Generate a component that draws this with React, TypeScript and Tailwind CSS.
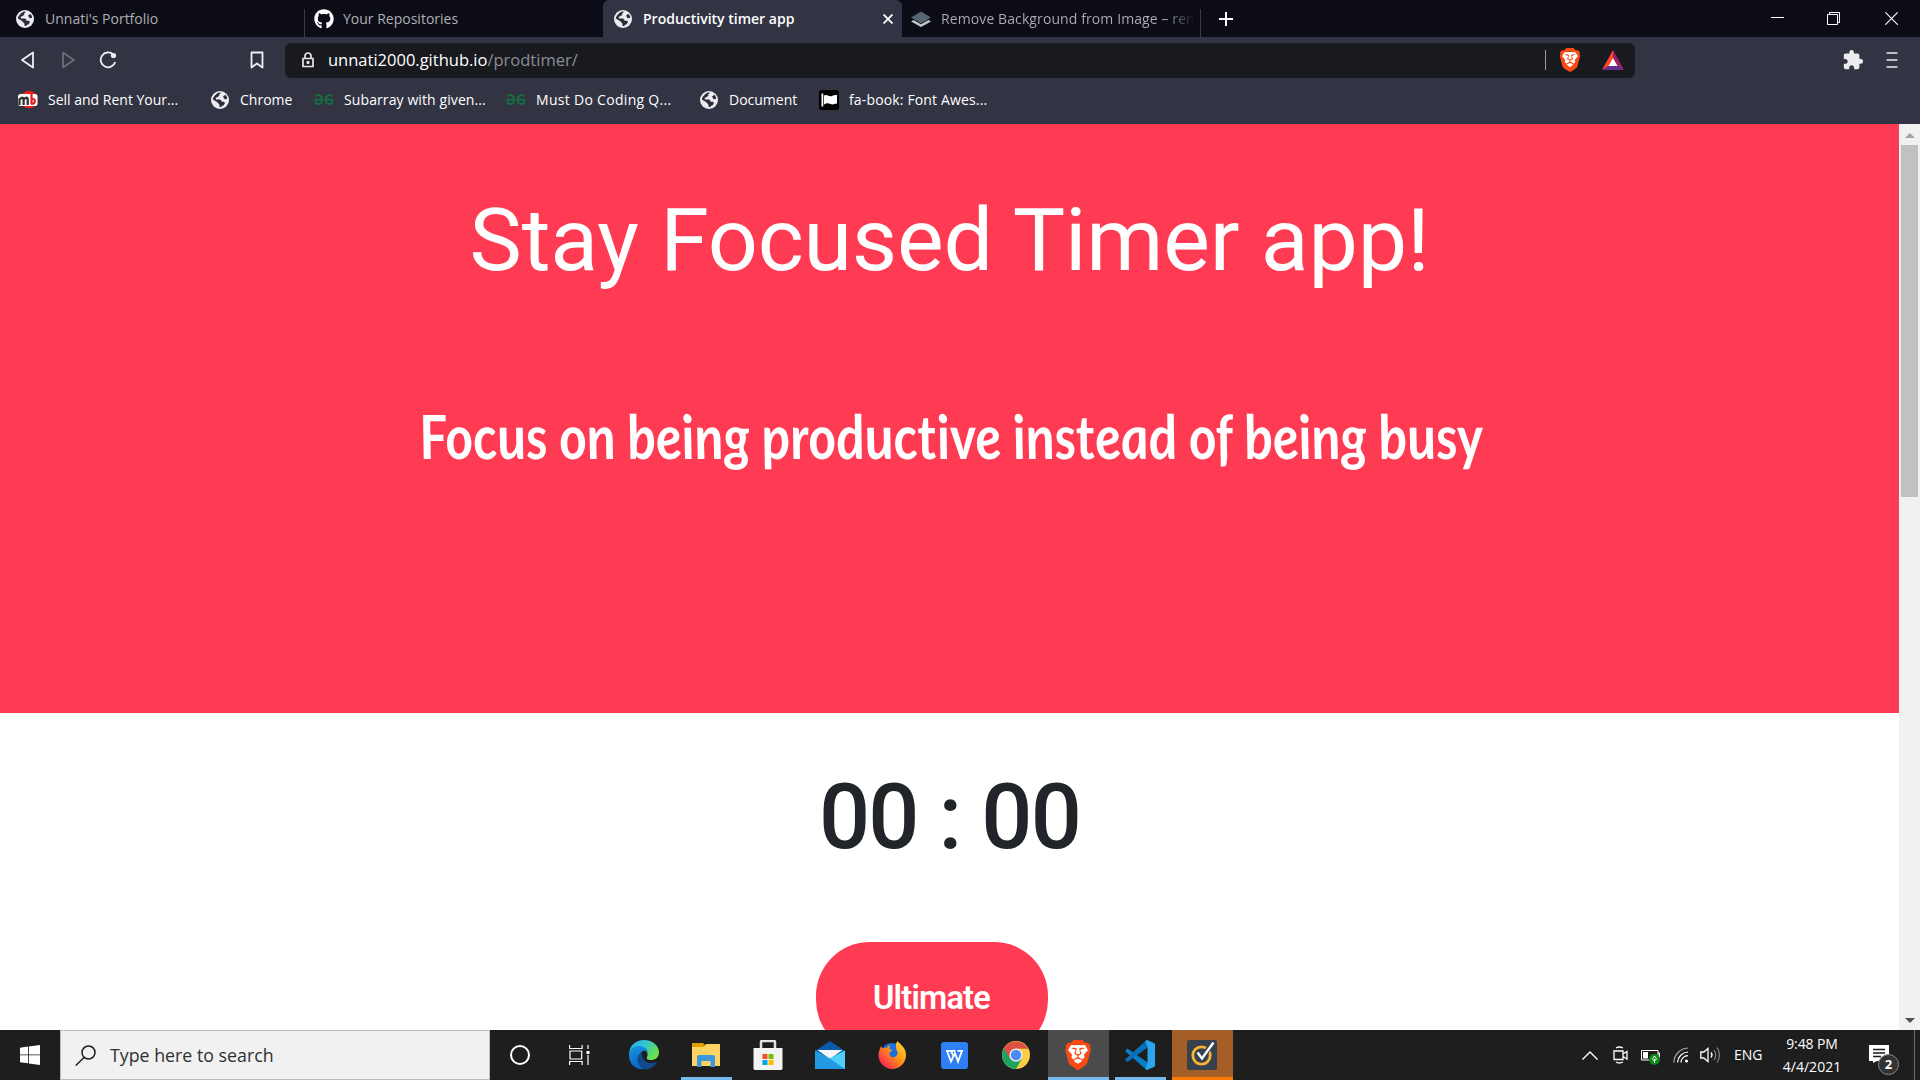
import React from 'react';
import { FaGithub } from 'react-icons/fa';
import { SiBrave } from 'react-icons/si';
import { MdExtension } from 'react-icons/md';

function Globe() {
  return (
    <svg viewBox="0 0 18 18" className="h-[18px] w-[18px]">
      <circle cx="9" cy="9" r="9" fill="#ededf0" />
      <path
        d="M10.2 1.8 8 3.6l.4 1.2-2.6 1.6-1 .2v1.8h4l1.6 1.2v1.2H13l1 1.2-1.6 2.4-2 .6v1.4l-2-.8v-2.2L6 11 1.8 8.4 2.6 6l3-3.2L8 1.6zM12 5.4l2.6-1.6 1.6 3-.4 1.2-2.2.2z"
        fill="#2b2d3a"
      />
    </svg>
  );
}

function Layers() {
  return (
    <svg viewBox="0 0 20 18" className="h-[18px] w-5">
      <path d="M0 11.5 10 17l10-5.5-2.5-1.4L10 14.2 2.5 10.1z" fill="#c3c8cc" />
      <path d="M10 1.5 0 7.5l10 6 10-6z" fill="#56656f" />
    </svg>
  );
}

function BrickIcon() {
  return (
    <svg viewBox="0 0 20 20" className="h-5 w-5">
      <circle cx="11" cy="9.500" r="8.800" fill="#f01c1c" />
      <rect x="0" y="4" width="19.500" height="12" rx="2.500" fill="#fff" />
      <path d="M1.500 15V8.500M1.500 9.500Q5.200 6 5.600 9.500V15M5.600 9.500Q9.500 6 9.700 9.500V15" fill="none" stroke="#333" strokeWidth="2.300" />
      <path d="M13.500 4v10.500M13.500 9.500c4.500-2 4.500 5 0 4.200" fill="none" stroke="#e02020" strokeWidth="2.200" />
    </svg>
  );
}

function GeeksIcon() {
  return (
    <svg viewBox="0 0 20 18" className="h-[18px] w-5" fill="none" stroke="#16713f" strokeWidth="1.700">
      <path d="M1.200 5.500C3 3.200 8 3.200 8 8.600c0 6-6.500 6-6.800 0H9.300M18.500 5.500C17 3.200 11.700 3.200 11.700 8.600c0 6 6.600 6 6.800 0h-8" />
    </svg>
  );
}

function FlagIcon() {
  return (
    <svg viewBox="0 0 20 20" className="h-5 w-5">
      <rect width="20" height="20" rx="2.500" fill="#000" />
      <path d="M2.500 3.500h1.800v13H2.500zM5 5.500c3-2 5 1.600 8 .5 1.500-.6 2.500-1 5-1v8.500c-3 .5-4 1.500-6.500.5-3-1.200-4-.8-6.500.5z" fill="#fff" />
    </svg>
  );
}

function BraveLion({ className }: { className: string }) {
  return (
    <div className={'relative ' + className}>
      <svg viewBox="0 0 24 24" className="absolute inset-0 h-full w-full">
        <path d="M6 4h12l2 4-2 9-6 5-6-5L4 8z" fill="#fff" />
      </svg>
      <SiBrave className="absolute inset-0 h-full w-full text-[#fb4b14]" />
    </div>
  );
}

function Tab({ icon, title, className }: { icon: React.ReactNode; title: string; className: string }) {
  return (
    <div className={'flex h-full shrink-0 items-center ' + className}>
      {icon}
      <span className="whitespace-nowrap">{title}</span>
    </div>
  );
}

function TabStrip() {
  return (
    <div className="flex h-[37px] items-center bg-[#0b0c15] text-sm text-[#aeafb4]">
      <Tab icon={<Globe />} title="Unnati's Portfolio" className="w-[304px] gap-[11px] pl-4" />
      <div className="mt-[9px] h-7 w-px bg-[#3b3c43]" />
      <Tab
        icon={<FaGithub className="h-5 w-5 text-white" />}
        title="Your Repositories"
        className="w-[298px] gap-[9px] pl-[9px]"
      />
      <div className="flex h-full w-[299px] items-center gap-[11px] rounded-t-md bg-[#323443] pl-[11px] pr-[9px] font-semibold text-white">
        <Globe />
        <span className="flex-1 whitespace-nowrap">Productivity timer app</span>
        <svg viewBox="0 0 10 10" className="h-2.5 w-2.5" stroke="#fff" strokeWidth="1.800">
          <path d="M.5.5l9 9M9.500.5l-9 9" />
        </svg>
      </div>
      <div className="flex h-full w-[298px] items-center gap-2.5 pl-[9px]">
        <Layers />
        <span className="w-[254px] whitespace-nowrap bg-linear-to-r from-[#aeafb4] from-88% to-transparent bg-clip-text tracking-[0.1px] text-transparent">
          Remove Background from Image – ren
        </span>
      </div>
      <div className="mt-[9px] h-7 w-px bg-[#3b3c43]" />
      <svg viewBox="0 0 14 14" className="ml-[18px] h-3.5 w-3.5" stroke="#fff" strokeWidth="2">
        <path d="M7 0v14M0 7h14" />
      </svg>
      <div className="ml-auto flex items-center pr-[22px]">
        <svg viewBox="0 0 13 13" className="mr-[43px] h-[13px] w-[13px]" stroke="#fff">
          <path d="M0 5.500h13" />
        </svg>
        <svg viewBox="0 0 13 13" className="mr-[45px] h-[13px] w-[13px]" stroke="#fff" fill="none">
          <path d="M.5 2.500h10v10H.5zM2.500 2.500v-2h10v10h-2" />
        </svg>
        <svg viewBox="0 0 13 13" className="h-[13px] w-[13px]" stroke="#fff" strokeWidth="1.100">
          <path d="M.3.3l12.400 12.400M12.700.3.3 12.700" />
        </svg>
      </div>
    </div>
  );
}

function Toolbar() {
  return (
    <div className="flex h-[46px] items-center bg-[#323443] pl-5 pr-[22px]">
      <svg viewBox="0 0 14 18" className="h-[18px] w-3.5" fill="none" stroke="#f0f0f2" strokeWidth="1.800" strokeLinejoin="round">
        <path d="M13 1.500v15L2 9z" />
      </svg>
      <svg viewBox="0 0 14 18" className="ml-[27px] h-[18px] w-3.5" fill="none" stroke="#6a6c78" strokeWidth="1.800" strokeLinejoin="round">
        <path d="M2 1.500v15L13 9z" />
      </svg>
      <svg viewBox="0 0 18 18" className="ml-6 h-[18px] w-[18px]" fill="none" stroke="#f0f0f2" strokeWidth="1.800">
        <path d="M14.200 3.500A7.400 7.400 0 1 0 16.200 11" />
        <circle cx="14.500" cy="4.500" r="2.600" fill="#f0f0f2" stroke="none" />
      </svg>
      <svg viewBox="0 0 14 18" className="ml-[133px] h-[18px] w-3.5" fill="none" stroke="#f0f0f2" strokeWidth="1.800" strokeLinejoin="round">
        <path d="M1.500 1.500h11v15L7 12.500l-5.500 4z" />
      </svg>
      <div className="ml-[21px] flex h-[35px] w-[1350px] items-center rounded-md bg-[#181a20] pl-[17px] pr-[9px]">
        <svg viewBox="0 0 12 16" className="h-4 w-3" fill="none" stroke="#e4e4e6" strokeWidth="1.700">
          <path d="M1 6.500h10v8H1zM3 6.500V4a3 3 0 0 1 6 0v2.500" />
          <circle cx="6" cy="10.500" r=".8" fill="#e4e4e6" />
        </svg>
        <span className="ml-3.5 text-[16.5px] text-white">unnati2000.github.io</span>
        <span className="text-[16.5px] text-[#8c8d93]">/prodtimer/</span>
        <div className="ml-auto h-5 w-px bg-[#9a9ba0]" />
        <BraveLion className="ml-3 h-6 w-6" />
        <svg viewBox="0 0 22 20" className="ml-5 mr-0.5 h-5 w-[22px]">
          <path d="M11 0 0 20l7-4 4-7z" fill="#ff4724" />
          <path d="M11 0v9l4 7 7 4z" fill="#9e1f63" />
          <path d="M0 20h22l-6.500-4h-9z" fill="#662d91" />
          <path d="M11 8 6.500 16h9z" fill="#fff" />
        </svg>
      </div>
      <MdExtension className="ml-auto h-[22px] w-[22px] text-[#ececee]" />
      <svg viewBox="0 0 12 18" className="ml-[22px] h-[18px] w-3" stroke="#ececee" strokeWidth="1.600">
        <path d="M.5 2h11M.5 9h11M.5 16h11" />
      </svg>
    </div>
  );
}

function Bookmark({ icon, label, className }: { icon: React.ReactNode; label: string; className: string }) {
  return (
    <div className={'flex shrink-0 items-center gap-2.5 whitespace-nowrap ' + className}>
      <div className="flex w-5 justify-center">{icon}</div>
      <span>{label}</span>
    </div>
  );
}

function Bookmarks() {
  return (
    <div className="flex h-[41px] items-center bg-[#323443] pb-[7px] pl-[18px] text-sm text-white">
      <Bookmark icon={<BrickIcon />} label="Sell and Rent Your..." className="w-48" />
      <Bookmark icon={<Globe />} label="Chrome" className="w-[104px]" />
      <Bookmark icon={<GeeksIcon />} label="Subarray with given..." className="w-48 tracking-[0.1px]" />
      <Bookmark icon={<GeeksIcon />} label="Must Do Coding Q..." className="w-[193px] tracking-[0.3px]" />
      <Bookmark icon={<Globe />} label="Document" className="w-[120px]" />
      <Bookmark icon={<FlagIcon />} label="fa-book: Font Awes..." className="tracking-[0.15px]" />
    </div>
  );
}

function Scrollbar() {
  return (
    <div className="flex w-[21px] flex-col items-center bg-[#f1f1f1]">
      <div className="flex h-[21px] items-center">
        <svg viewBox="0 0 10 5" className="mt-0.5 h-[5px] w-2.5">
          <path d="M0 5 5 0l5 5z" fill="#a3a3a3" />
        </svg>
      </div>
      <div className="h-[352px] w-[17px] bg-[#c1c1c1]" />
      <div className="mt-auto flex h-[21px] items-center">
        <svg viewBox="0 0 10 5" className="mt-0.5 h-[5px] w-2.5">
          <path d="M0 0l5 5 5-5z" fill="#505050" />
        </svg>
      </div>
    </div>
  );
}

function Page() {
  return (
    <div className="flex min-h-0 flex-1 bg-white">
      <main className="flex flex-1 flex-col items-center overflow-hidden font-['Roboto',sans-serif]">
        <section className="flex h-[589px] w-full shrink-0 flex-col items-center bg-[#ff3b53] text-white">
          <h1 className="mt-[63px] whitespace-nowrap text-[88px] leading-[106px] tracking-[-0.22px]">Stay Focused Timer app!</h1>
          <p className="mt-[103px] w-[1062px] origin-left scale-x-[0.87] skew-x-[8deg] whitespace-nowrap font-['Lato',cursive] text-[61px] font-bold italic leading-20 [font-variant-ligatures:none]">
            Focus on being productive instead of being busy
          </p>
        </section>
        <div className="mt-[52px] h-[106px] shrink-0 whitespace-nowrap text-[90px] font-medium leading-[106px] tracking-[-1.7px] text-[#212529]">
          00 : 00
        </div>
        <button className="mr-[36px] mt-[71px] h-28 w-[232px] shrink-0 rounded-[54px] bg-[#ff3b53] text-[32.5px] font-semibold tracking-[-0.8px] text-white">
          Ultimate
        </button>
      </main>
      <Scrollbar />
    </div>
  );
}

function EdgeIcon() {
  return (
    <svg viewBox="0 0 30 30" className="h-[30px] w-[30px]">
      <defs>
        <linearGradient id="edgeTop" x1="0" y1="0" x2="1" y2=".5">
          <stop offset="0" stopColor="#2aa7e8" />
          <stop offset=".5" stopColor="#2fc5d2" />
          <stop offset="1" stopColor="#6be04b" />
        </linearGradient>
        <linearGradient id="edgeSide" x1="0" y1="0" x2=".4" y2="1">
          <stop offset="0" stopColor="#1b96e4" />
          <stop offset="1" stopColor="#0a64bd" />
        </linearGradient>
      </defs>
      <path d="M0 13C1 5 7 0 15 0c9 0 15 6 15 12.500 0 5-4 7.500-8 7.500-3.500 0-5-1.300-4-3 2-3.500-.5-7-5-7-5 0-10 .5-13 3z" fill="url(#edgeTop)" />
      <path d="M0 15c0-5 4-9 10-9 5 0 8.500 3 9 6.500-3-3.500-8-1.500-8 3.500 0 6 5 10 11 10-9 7-22 2-22-11z" fill="url(#edgeSide)" />
      <path d="M13 12.500C5 16 8 27 17 29.700c5-.7 9-3.700 11-7.700-1-.5-3 1.500-7 1-6-.7-8.500-5-8-10.500z" fill="#114a8b" />
    </svg>
  );
}

function ExplorerIcon() {
  return (
    <svg viewBox="0 0 28 24" className="h-6 w-7">
      <path d="M0 0h11l3 3v4H0z" fill="#e09f00" />
      <path d="M0 4h12l2-3h14v22H0z" fill="#fcd462" />
      <path d="M5 24V14q0-2 2-2h14q2 0 2 2v10h-4.500v-6h-9v6z" fill="#3c97dd" />
    </svg>
  );
}

function StoreIcon() {
  return (
    <svg viewBox="0 0 30 30" className="h-[30px] w-[30px]">
      <path d="M8 9V2q0-1 1-1h12q1 0 1 1v7" fill="none" stroke="#e4e4e4" strokeWidth="2.500" />
      <path d="M.5 8h29v20.500q0 1.500-1.500 1.500H2Q.5 30 .5 28.500z" fill="#f3f3f3" />
      <path d="M9.500 14h5v5h-5z" fill="#f25022" />
      <path d="M15.500 14h5v5h-5z" fill="#7fba00" />
      <path d="M9.500 20h5v5h-5z" fill="#00a4ef" />
      <path d="M15.500 20h5v5h-5z" fill="#ffb900" />
    </svg>
  );
}

function MailIcon() {
  return (
    <svg viewBox="0 0 30 28" className="h-7 w-[30px]">
      <path d="M0 10 15 0l15 10-15 9z" fill="#0a58a8" />
      <path d="M2.500 9h25L15 18z" fill="#f6f6f6" />
      <path d="M0 9.500 15 17.500l15-8V28H0z" fill="#28a8ea" />
      <path d="M30 9.500V28L15 17.500z" fill="#50d0f8" />
      <path d="M0 9.500V28h30z" fill="#229ae2" />
    </svg>
  );
}

function FirefoxIcon() {
  return (
    <svg viewBox="0 0 28 28" className="h-7 w-7">
      <defs>
        <linearGradient id="fox" x1="1" y1="0" x2="0" y2="1">
          <stop offset="0" stopColor="#ffe43a" />
          <stop offset=".45" stopColor="#ff9417" />
          <stop offset=".8" stopColor="#ff3647" />
          <stop offset="1" stopColor="#e21585" />
        </linearGradient>
      </defs>
      <circle cx="14" cy="13" r="11" fill="#1b6fe0" />
      <path d="M3 5l1.500 2.500C6 6.500 7 6.500 8.500 7L12 3.500 11.500 8l3 1-3 2.500c-.5 4 3 6 6 4 3-2 2.500-5 1-6 0-4-2-5 1-9.500 2 3 8.500 6 8.500 14A14 14 0 0 1 14 28 14 14 0 0 1 .5 14C.5 10 2 8 3 5z" fill="url(#fox)" />
    </svg>
  );
}

function WpsIcon() {
  return (
    <svg viewBox="0 0 27 27" className="h-[27px] w-[27px]">
      <rect width="27" height="27" rx="3" fill="#2f80f6" />
      <path d="M5 8.800h9.500M6 9l4 10.500 4-8.500 3 8.500L21 8.800h-4.500M10 9l3 6" fill="none" stroke="#fff" strokeWidth="1.800" />
    </svg>
  );
}

function ChromeIcon() {
  return (
    <svg viewBox="0 0 28 28" className="h-7 w-7">
      <circle cx="14" cy="14" r="14" fill="#ffcd42" />
      <path d="M14 14 1.900 7A14 14 0 0 0 14 28l6-10.500z" fill="#1da260" />
      <path d="M1.900 7A14 14 0 0 1 26.100 7.700H14L8 17.500z" fill="#dd5044" />
      <circle cx="14" cy="14" r="6.600" fill="#f1f1f1" />
      <circle cx="14" cy="14" r="5.200" fill="#4c8bf5" />
    </svg>
  );
}

function CodeIcon() {
  return (
    <svg viewBox="0 0 30 30" className="h-[30px] w-[30px]">
      <path d="M0 11l2.500-2.500 20 14V30L20.500 29z" fill="#0a7fc9" />
      <path d="M0 19.500 2.500 22l20-14.500V0L20.500 1z" fill="#0a6fb8" />
      <path d="M22 0l8 3.500v23L22 30l-1.500-1 2-6.500v-15l-2-6.500z" fill="#2aa5ee" />
    </svg>
  );
}

function NortonIcon() {
  return (
    <svg viewBox="0 0 30 30" className="h-[30px] w-[30px]">
      <rect width="30" height="30" rx="2" fill="#36414d" />
      <circle cx="14.500" cy="15.500" r="8.700" fill="none" stroke="#f9b233" strokeWidth="2.800" />
      <path d="M10.500 13.500l4 5.500L26 2.500" fill="none" stroke="#36414d" strokeWidth="5" />
      <path d="M10.500 12.500l4.500 6L26.500 2.500" fill="none" stroke="#fff" strokeWidth="2.400" />
    </svg>
  );
}

function TaskCell({ children, bar = '', bg = '' }: { children: React.ReactNode; bar?: string; bg?: string }) {
  return (
    <div className="flex h-full w-[62px] shrink-0 justify-center">
      <div className={'flex h-full w-[61px] flex-col items-center ' + bg}>
        <div className="flex flex-1 items-center">{children}</div>
        <div className={'-mt-[3px] h-[3px] ' + bar} />
      </div>
    </div>
  );
}

function Tray() {
  return (
    <div className="ml-auto flex h-full items-center">
      <svg viewBox="0 0 16 9" className="h-[9px] w-4" fill="none" stroke="#fff" strokeWidth="1.400">
        <path d="M.5 8.500 8 1l7.500 7.500" />
      </svg>
      <svg viewBox="0 0 15 18" className="ml-[15px] h-[18px] w-[15px]" fill="none" stroke="#fff" strokeWidth="1.300">
        <path d="M1 5h9v8.500H1zM10 8l4-2.500V13l-4-2.500M3 2q3-2 7 0M3 16q3 2 7 0" />
      </svg>
      <svg viewBox="0 0 20 16" className="ml-[13px] mt-1 h-4 w-5">
        <path d="M.5 1.500h16.500v9.500H.5zM17 4h1.500v4H17" fill="none" stroke="#fff" />
        <path d="M2 3h5v6.500H2z" fill="#fff" />
        <circle cx="13.500" cy="10.300" r="5.500" fill="#108a1c" />
        <path d="M13.500 7l2 2.800-2 2.200-2-2.200zM13.500 10v4" fill="none" stroke="#fff" />
      </svg>
      <svg viewBox="0 0 16 16" className="ml-3 h-4 w-4" fill="none" stroke="#fff" strokeWidth="1.200">
        <path d="M.8 15.500A15 15 0 0 1 15 1" stroke="#a5a5a5" />
        <path d="M4.500 15.500A11 11 0 0 1 15 5M8 15.500A7 7 0 0 1 15 8.700" />
        <circle cx="13.500" cy="14" r="1.600" fill="#fff" stroke="none" />
      </svg>
      <svg viewBox="0 0 21 18" className="ml-[11px] h-[18px] w-[21px]" fill="none" stroke="#fff" strokeWidth="1.300">
        <path d="M.8 6h3L8 2.500v13L3.800 12h-3zM11 6.500q2 2.500 0 5" />
        <path d="M14 4q3.500 5 0 10M17 1.500q5 7.500 0 15" stroke="#7d7d7d" />
      </svg>
      <span className="ml-[13px] w-[30px] text-sm">ENG</span>
      <div className="ml-3 w-[72px] text-center text-sm leading-[23px]">
        <div className="tracking-[-0.1px]">9:48 PM</div>
        <div>4/4/2021</div>
      </div>
      <div className="relative ml-[21px] h-8 w-[31px]">
        <svg viewBox="0 0 20 18" className="absolute left-0 top-1.5 h-[18px] w-5">
          <path d="M0 0h20v16H8l-4 2v-2H0z" fill="#fff" />
          <path d="M4 4.500h12M4 8h12M4 11.500h8" stroke="#1e1e1e" strokeWidth="1.300" />
        </svg>
        <div className="absolute left-[9px] top-[15px] flex h-[21px] w-[21px] items-center justify-center rounded-full border border-[#8a8a8a] bg-[#333] text-[13px] font-bold">
          2
        </div>
      </div>
      <div className="ml-3.5 mr-[5px] h-full w-px bg-[#6d6d6d]" />
    </div>
  );
}

function Taskbar() {
  return (
    <div className="flex h-[50px] shrink-0 items-center bg-[#1e1e1e] text-white">
      <div className="flex w-[60px] justify-center">
        <svg viewBox="0 0 20 20" className="h-5 w-5" fill="#fff">
          <path d="M0 2.800 8 1.600v7.900H0zM8.800 1.500 20 0v9.500H8.800zM0 10.300h8v8L0 17.200zM8.800 10.300H20V20L8.800 18.400z" />
        </svg>
      </div>
      <div className="flex h-full w-[430px] items-center border border-[#bdbdbd] bg-[#f1f1f1] pl-3.5">
        <svg viewBox="0 0 21 21" className="h-[21px] w-[21px]" fill="none" stroke="#1e1e1e" strokeWidth="1.500">
          <circle cx="13.500" cy="7.500" r="6.500" />
          <path d="M9 12.500.8 20.500" />
        </svg>
        <span className="ml-3.5 text-[17.8px] text-[#303030]">Type here to search</span>
      </div>
      <div className="flex w-[60px] justify-center">
        <div className="h-5 w-5 rounded-full border-[2.5px] border-white" />
      </div>
      <div className="flex w-[58px] justify-center">
        <svg viewBox="0 0 21 20" className="h-5 w-[21px]" fill="none" stroke="#fff" strokeWidth="1.200">
          <path d="M.6 0v3.500h12.500V0M1 6h11.700v8H1zM.6 20v-3.500h12.500V20M19 0v4M19 10v10" />
          <path d="M17.500 6h3v3h-3z" fill="#fff" stroke="none" />
        </svg>
      </div>
      <div className="ml-[5px] flex h-full">
        <TaskCell><EdgeIcon /></TaskCell>
        <TaskCell bar="w-[51px] bg-[#76b9ed]"><ExplorerIcon /></TaskCell>
        <TaskCell><StoreIcon /></TaskCell>
        <TaskCell><MailIcon /></TaskCell>
        <TaskCell><FirefoxIcon /></TaskCell>
        <TaskCell><WpsIcon /></TaskCell>
        <TaskCell><ChromeIcon /></TaskCell>
        <TaskCell bg="bg-[#4b4b4b]" bar="w-full bg-[#76b9ed]"><BraveLion className="h-[30px] w-[30px]" /></TaskCell>
        <TaskCell bar="w-[51px] bg-[#76b9ed]"><CodeIcon /></TaskCell>
        <TaskCell bg="bg-[#a65e27]" bar="w-full bg-[#ff7800]"><NortonIcon /></TaskCell>
      </div>
      <Tray />
    </div>
  );
}

export default function App() {
  return (
    <div className="flex h-[1080px] w-[1920px] flex-col overflow-hidden font-['Open_Sans','Noto_Sans',sans-serif]">
      <TabStrip />
      <Toolbar />
      <Bookmarks />
      <Page />
      <Taskbar />
    </div>
  );
}
